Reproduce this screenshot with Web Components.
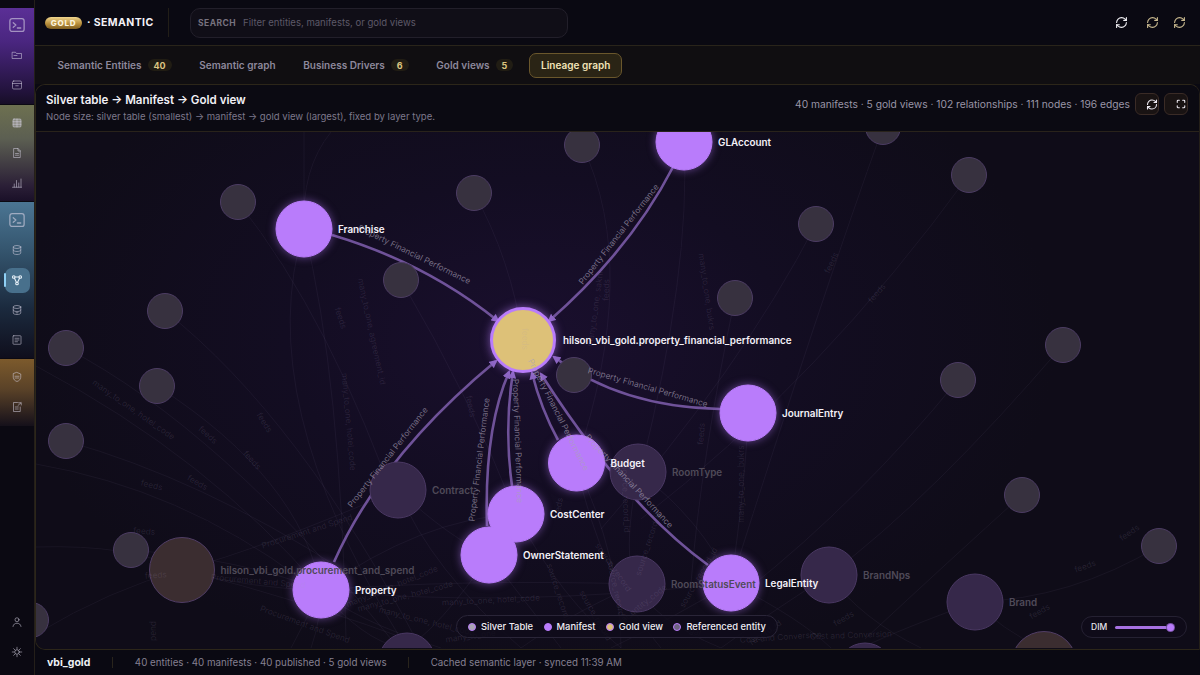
<!doctype html>
<html>
<head>
<meta charset="utf-8">
<style>
  html, body { margin: 0; height: 100%; background: #0a0912; overflow: hidden; }
  body { font-family: Inter, "Liberation Sans", sans-serif; }
  vbi-app { width: 1200px; height: 675px; }
</style>
</head>
<body>
<vbi-app></vbi-app>
<script>
const ICONS = {
  terminal: '<rect x="2.5" y="3.5" width="19" height="17" rx="3"/><path d="M7 9l3.5 3L7 15M12.5 16H17"/>',
  folder: '<path d="M3 6.5h6l2 2.5h10v10H3z"/><path d="M6 13h6"/>',
  archive: '<rect x="3" y="4" width="18" height="16" rx="2.5"/><path d="M3 9h18M9.5 13.5h5"/>',
  table: '<rect x="4" y="4" width="16" height="16" rx="2" fill="currentColor" fill-opacity=".55"/><path d="M12 4v16M4 9.5h16M4 14.5h16"/>',
  doc: '<path d="M6 3h8l4.5 4.5V21H6z"/><path d="M14 3v5h4.5M9 13h6M9 16.5h6"/>',
  chart: '<path d="M3 20.5h18M6.5 20v-6M11 20V7M15.5 20v-8M20 20V4"/>',
  db: '<ellipse cx="12" cy="6" rx="7.5" ry="3"/><path d="M4.5 6v12c0 1.7 3.4 3 7.5 3s7.5-1.3 7.5-3V6M4.5 12c0 1.7 3.4 3 7.5 3s7.5-1.3 7.5-3"/>',
  graph: '<circle cx="5.5" cy="6" r="2.6"/><circle cx="18.5" cy="6" r="2.6"/><circle cx="12" cy="19" r="2.6"/><path d="M8 6h8M7 8.5l3.8 8M17 8.5l-3.8 8"/>',
  dbdown: '<ellipse cx="12" cy="6" rx="7.5" ry="3"/><path d="M4.5 6v12c0 1.7 3.4 3 7.5 3s7.5-1.3 7.5-3V6M4.5 12c0 1.7 3.4 3 7.5 3s7.5-1.3 7.5-3M9.5 16l2.5 2.5 2.5-2.5"/>',
  list: '<rect x="4" y="3.5" width="16" height="17" rx="1.5"/><path d="M8 8.5h8M8 12h8M8 15.5h5"/>',
  shield: '<path d="M12 3l7.5 3v6.5c0 4.3-3.2 7-7.5 8.5-4.3-1.5-7.5-4.2-7.5-8.5V6z"/><path d="M8 10.5h8M8 14h8"/>',
  docedit: '<path d="M18.5 12v9H5V3h8"/><path d="M8.5 12h6M8.5 16h6M15 3.5h5.5V8" /><path d="M14 9l6-5.5"/>',
  user: '<circle cx="12" cy="7.5" r="4"/><path d="M4 21c.8-4.6 3.8-6.5 8-6.5s7.200 1.900 8 6.500"/>',
  gear: '<circle cx="12" cy="12" r="4.500"/><path d="M12 2.500v4M12 17.500v4M2.500 12h4M17.500 12h4M5.300 5.300l2.800 2.800M15.900 15.900l2.800 2.800M5.300 18.700l2.800-2.800M15.900 8.100l2.800-2.800"/>',
  refresh: '<path d="M3 12a9 9 0 0 1 9-9 9.750 9.750 0 0 1 6.740 2.740L21 8"/><path d="M21 3v5h-5"/><path d="M21 12a9 9 0 0 1-9 9 9.750 9.750 0 0 1-6.740-2.740L3 16"/><path d="M8 16H3v5"/>',
  expand: '<path d="M8 3H5a2 2 0 0 0-2 2v3M21 8V5a2 2 0 0 0-2-2h-3M3 16v3a2 2 0 0 0 2 2h3M16 21h3a2 2 0 0 0 2-2v-3"/>'
};

function icon(name, size, width) {
  return `<svg width="${size}" height="${size}" viewBox="0 0 24 24" fill="none" stroke="currentColor" stroke-width="${width || 2}" stroke-linecap="round" stroke-linejoin="round">${ICONS[name]}</svg>`;
}

class SideIcon extends HTMLElement {
  connectedCallback() {
    const active = this.hasAttribute('active');
    const size = this.getAttribute('size') || 13;
    this.attachShadow({ mode: 'open' }).innerHTML = `
      <style>
        :host { display: flex; height: 30px; align-items: center; justify-content: center; color: rgba(214,210,228,.62); position: relative; }
        .pill { width: 25px; height: 25px; border-radius: 7px; display: flex; align-items: center; justify-content: center; }
        :host([active]) { color: #e6f0f8; }
        :host([active]) .pill { background: #48708c; }
        :host([active])::before { content: ''; position: absolute; left: 4px; top: 8px; width: 1.5px; height: 14px; background: #8fd0f5; border-radius: 1px; }
      </style>
      <div class="pill">${icon(this.getAttribute('name'), size, active ? 2.2 : 1.7)}</div>`;
  }
}
customElements.define('side-icon', SideIcon);

class VbiSidebar extends HTMLElement {
  connectedCallback() {
    this.attachShadow({ mode: 'open' }).innerHTML = `
      <style>
        :host { display: flex; flex-direction: column; width: 34px; flex: none; background: #0b0912; border-right: 1px solid #241f1a; box-sizing: content-box; }
        section { padding-top: 3px; box-sizing: border-box; }
        .a { margin-top: 8px; height: 96px; padding-top: 2px; background: linear-gradient(#5b2f96, #4a2680 35%, #21123a 88%, #170e26); }
        .b { margin-top: 1px; height: 96px; background: linear-gradient(#6d7050, #5c5f52 35%, #2a1e36 85%, #1a1028); }
        .c { margin-top: 1px; height: 156px; background: linear-gradient(#4b7593, #35566f 30%, #1b2a3e 68%, #0f0e1c); }
        .d { margin-top: 1px; height: 67px; background: linear-gradient(#7c5a2c, #5a4228 45%, #15101a); }
        .e { margin-top: auto; padding-bottom: 8px; }
      </style>
      <section class="a"><side-icon name="terminal" size="18"></side-icon><side-icon name="folder" size="12"></side-icon><side-icon name="archive" size="12"></side-icon></section>
      <section class="b"><side-icon name="table" size="12"></side-icon><side-icon name="doc" size="12"></side-icon><side-icon name="chart" size="12"></side-icon></section>
      <section class="c"><side-icon name="terminal" size="18"></side-icon><side-icon name="db" size="12"></side-icon><side-icon name="graph" size="12" active></side-icon><side-icon name="dbdown" size="12"></side-icon><side-icon name="list" size="12"></side-icon></section>
      <section class="d"><side-icon name="shield" size="12"></side-icon><side-icon name="docedit" size="12"></side-icon></section>
      <section class="e"><side-icon name="user" size="12"></side-icon><side-icon name="gear" size="12"></side-icon></section>`;
  }
}
customElements.define('vbi-sidebar', VbiSidebar);

class VbiTopbar extends HTMLElement {
  connectedCallback() {
    this.attachShadow({ mode: 'open' }).innerHTML = `
      <style>
        :host { display: flex; align-items: center; height: 45px; flex: none; background: #0a0912; border-bottom: 1px solid #29241a; padding-left: 10px; box-sizing: content-box; }
        .gold { width: 37px; height: 12px; border-radius: 6px; background: linear-gradient(#f0d68e, #b98f3c 55%, #7c5c20); color: #fbf3dc; font-size: 8px; font-weight: 800; letter-spacing: .7px; display: flex; align-items: center; justify-content: center; }
        .title { margin-left: 5px; width: 66px; color: #f4f2f8; font-size: 10.5px; font-weight: 700; letter-spacing: .4px; white-space: nowrap; }
        .sep { width: 1px; height: 29px; background: #221e18; margin: 0 21px 0 15px; }
        .search { width: 378px; height: 30px; box-sizing: border-box; border: 1px solid #221f2a; border-radius: 10px; background: #100e17; display: flex; align-items: center; padding-left: 7px; }
        .search b { font-size: 8.5px; font-weight: 700; letter-spacing: .45px; color: #77727f; width: 45px; }
        .search span { font-size: 9.55px; color: #5d5968; white-space: nowrap; }
        .actions { margin-left: auto; display: flex; align-items: center; padding-right: 14px; }
        .actions span { display: flex; color: #c9b98f; margin-left: 18px; }
        .actions span:first-child { color: #f2f1f5; }
        .actions span + span + span { margin-left: 14px; }
      </style>
      <div class="gold">GOLD</div>
      <div class="title">· SEMANTIC</div>
      <div class="sep"></div>
      <div class="search"><b>SEARCH</b><span>Filter entities, manifests, or gold views</span></div>
      <div class="actions"><span>${icon('refresh', 13)}</span><span>${icon('refresh', 13)}</span><span>${icon('refresh', 13)}</span></div>`;
  }
}
customElements.define('vbi-topbar', VbiTopbar);

class TabItem extends HTMLElement {
  connectedCallback() {
    const count = this.getAttribute('count');
    this.attachShadow({ mode: 'open' }).innerHTML = `
      <style>
        :host { display: flex; align-items: center; height: 23px; padding: 0 11px; color: #8d889c; font-size: 10px; font-weight: 600; letter-spacing: .02px; border: 1px solid transparent; border-radius: 7px; white-space: nowrap; }
        :host([active]) { background: #2a2415; border-color: #6a572c; color: #f1e3b8; }
        i { font-style: normal; margin-left: 6px; height: 12px; min-width: 17px; padding: 0 6px; box-sizing: border-box; border-radius: 7px; background: #211d14; color: #dcc681; font-size: 9px; font-weight: 700; display: flex; align-items: center; justify-content: center; }
      </style>
      <slot></slot>${count ? `<i>${count}</i>` : ''}`;
  }
}
customElements.define('tab-item', TabItem);

class VbiTabs extends HTMLElement {
  connectedCallback() {
    this.attachShadow({ mode: 'open' }).innerHTML = `
      <style>
        :host { display: flex; align-items: center; gap: 3.6px; height: 38px; flex: none; padding-left: 10.5px; background: #100e11; }
      </style>
      <slot></slot>`;
  }
}
customElements.define('vbi-tabs', VbiTabs);

class VbiPanel extends HTMLElement {
  connectedCallback() {
    this.attachShadow({ mode: 'open' }).innerHTML = `
      <style>
        :host { display: flex; flex-direction: column; flex: 1; min-height: 0; border: 1px solid #2c2619; border-right-color: #241f18; border-radius: 10px 10px 0 10px; overflow: hidden; background: #0e0b17; }
        header { display: flex; align-items: center; height: 47px; flex: none; box-sizing: border-box; padding: 0 11px 0 10px; background: #0b0a12; border-bottom: 1px solid #29231b; }
        h1 { margin: 0; font-size: 11.55px; line-height: 15px; font-weight: 600; color: #f2f0f6; white-space: nowrap; }
        p { margin: 2px 0 0; font-size: 9.55px; line-height: 13px; color: #7d788b; white-space: nowrap; }
        .stats { margin-left: auto; margin-bottom: 8px; font-size: 10.25px; color: #9a95a7; white-space: nowrap; }
        button { width: 24px; height: 22px; padding: 0 0 0 10px; margin: 0 0 8px 5px; border-radius: 6px; border: 1px solid #3a2b26; background: #191313; color: #eeeaf2; display: flex; align-items: center; justify-content: center; box-sizing: border-box; }
        main { flex: 1; min-height: 0; position: relative; }
      </style>
      <header>
        <div><h1>Silver table → Manifest → Gold view</h1><p>Node size: silver table (smallest) → manifest → gold view (largest), fixed by layer type.</p></div>
        <div class="stats">40 manifests · 5 gold views · 102 relationships · 111 nodes · 196 edges</div>
        <button>${icon('refresh', 13, 2.2)}</button><button>${icon('expand', 10, 2.6)}</button>
      </header>
      <main><slot></slot></main>`;
  }
}
customElements.define('vbi-panel', VbiPanel);

// page coordinates, viewBox keeps them 1:1
const SILVER = [[581,146],[882,128],[968,176],[815,225],[237,203],[473,194],[400,281],[734,299],[164,312],[65,349],[156,387],[65,442],[573,376],[1062,346],[957,381],[1021,496],[1158,547],[130,551],[30,621]];
const REFERENCED = [[397,491,'Contract'],[637,473,'RoomType'],[636,585,'RoomStatusEvent'],[828,576,'BrandNps'],[974,603,'Brand'],[406,662,''],[864,672,'']];
const GOLD_DIM = [[181,571,'hilson_vbi_gold.procurement_and_spend'],[1043,665,'']];
const MANIFESTS = [[683,143,'GLAccount'],[303,230,'Franchise'],[747,414,'JournalEntry'],[575.5,464,'Budget'],[515,515,'CostCenter'],[488,556,'OwnerStatement'],[320,591,'Property'],[730,584,'LegalEntity']];

const STRONG = [
  'M331 236Q425 264 497 322', 'M672 168Q630 250 548 322', 'M719 410Q620 408 553 358',
  'M557 441Q540 410 531 374', 'M707 566Q624 506 540 375', 'M511 487Q503 430 512 373',
  'M486 527Q483 430 508 373', 'M333 563Q380 457 495 362'
];
const STRONG_LABELS = [
  [412,258,26], [620,237,-52], [646,391,16], [555,417,63], [626,484,47], [481,461,-83], [514,442,88], [389,460,-52]
];

const FAINT = [
  'M237 203Q330 320 400 520','M303 230Q340 380 345 640','M303 230Q250 400 400 640','M330 133Q300 170 303 230','M303 133V230',
  'M164 312Q300 420 420 650','M65 349Q220 430 390 640','M156 387Q300 480 320 591','M65 442Q200 480 340 570','M35 367Q210 460 320 591','M35 465Q180 490 300 580',
  'M130 551Q240 560 320 591','M35 548Q130 545 181 571','M35 635Q110 590 181 571','M181 571Q260 550 397 491','M181 571Q250 590 320 591','M181 571Q300 600 430 649',
  'M400 281Q470 400 515 515','M473 194Q510 260 522 341','M581 146Q640 270 575 464','M882 128Q820 300 730 584','M968 176Q820 380 640 520','M815 225Q740 370 600 530',
  'M734 299Q700 460 690 584','M1062 346Q930 500 828 576','M957 381Q860 500 747 590','M1021 496Q950 560 864 640','M1158 547Q1070 600 974 603',
  'M683 143Q690 270 640 470','M747 414Q745 480 730 584','M637 473Q620 560 636 585','M637 473Q700 520 730 584','M397 491Q450 540 488 556','M397 491Q430 570 520 649',
  'M320 591Q500 610 730 584','M320 591Q460 580 636 585','M320 591Q420 520 515 515','M320 591Q360 640 400 649','M320 591Q300 630 290 649','M320 591Q350 620 440 649','M320 591Q320 620 310 649',
  'M515 515Q560 600 620 649','M488 556Q530 610 560 649','M575 464Q620 560 620 649','M575 464Q600 580 660 649','M730 584Q670 620 610 649','M730 584Q800 620 830 649','M636 585Q560 620 520 649',
  'M636 585Q650 620 720 649','M828 576Q760 620 720 649','M828 576Q860 620 920 649','M974 603Q1000 630 1040 649','M974 603Q900 630 860 649','M406 649Q450 620 515 515'
];
const FAINT_LABELS = [
  ['many_to_one, hotel_code',131,413,35],['feeds',205,438,42],['feeds',249,463,48],['feeds',261,425,58],['feeds',195,486,30],['feeds',150,489,14],['feeds',143,535,5],['feeds',155,579,-4],
  ['many_to_one, agreement_id',368,333,78],['feeds',337,320,72],['many_to_one, hotel_code',345,423,85],['many_to_one, saknr',597,310,-82],['feeds',608,291,-88],['feeds',521,340,90],
  ['many_to_one, bukrs',703,293,82],['many_to_one, bukrs',743,485,-90],['feeds',703,435,-85],['feeds',467,408,78],['feeds',833,265,-65],['feeds',878,296,-50],['feeds',1130,536,-35],
  ['Procurement and Spend',307,535,-18],['Procurement and Spend',257,585,5],['Procurement and Spend',303,628,20],['many_to_one, hotel_code',392,590,-22],['many_to_one, hotel_code',405,600,-15],
  ['many_to_one, hotel_code',490,604,-3],['source_record_id',556,598,72],['source_record',612,590,78],['source_record_id',650,545,-72],['source_record',610,570,55],['legal_entity_code',640,610,-38],
  ['feeds',560,510,-80],['source_record_id',622,500,88],['source_record_id',700,580,-60],['many_to_one, hotel_code',425,625,14],['Cost and Conversion',780,641,-4],['Cost and Conversion',850,639,-2],
  ['many_to_one',470,640,-8],['feeds',844,622,-30],['record_id',766,636,-35],['feeds',1040,615,-30],['feeds',1085,570,-20],['source_record',592,618,60],['legal',690,634,20],['pend',155,632,-90]
];

class LineageGraph extends HTMLElement {
  connectedCallback() {
    const circles = (list, r, fill, stroke) => list.map(n =>
      `<circle cx="${n[0]}" cy="${n[1]}" r="${r}" fill="${fill}" stroke="${stroke}" stroke-width="1"/>`).join('');
    const tag = (list, r, cls) => list.filter(n => n[2]).map(n =>
      `<text class="${cls}" x="${n[0] + r + 6}" y="${n[1] + 4}">${n[2]}</text>`).join('');
    this.attachShadow({ mode: 'open' }).innerHTML = `
      <style>
        :host { display: block; position: absolute; inset: 0; overflow: hidden; background: radial-gradient(ellipse 520px 340px at 500px 210px, #1a0f2e 0%, #130d22 48%, #0f0c18 100%); }
        svg { display: block; }
        text { font-family: Inter, "Liberation Sans", sans-serif; }
        .faint { fill: none; stroke: #b9a8d8; stroke-opacity: .06; stroke-width: 1; }
        .strong { fill: none; stroke: #6f5299; stroke-width: 2.600; marker-end: url(#tip); }
        .fl { font-size: 8.300px; fill: #a79cbc; fill-opacity: .15; text-anchor: middle; }
        .sl { font-size: 8.300px; fill: #aaa1b8; fill-opacity: .66; text-anchor: middle; }
        .name { font-size: 9.870px; font-weight: 600; fill: #f4f1f8; }
        .dim { font-size: 9.870px; font-weight: 600; fill: #4f4a58; }
        .manifest { filter: drop-shadow(0 0 4px rgba(184,124,251,.5)); }
        .gold { filter: drop-shadow(0 0 5px rgba(184,124,251,.6)); }
      </style>
      <svg width="1165" height="516" viewBox="35 133 1165 516">
        <defs><marker id="tip" viewBox="0 0 8 8" refX="6" refY="4" markerWidth="3.200" markerHeight="3.200" orient="auto"><path d="M0 0L8 4L0 8z" fill="#8a64c0"/></marker></defs>
        ${FAINT.map(d => `<path class="faint" d="${d}"/>`).join('')}
        ${STRONG.map(d => `<path class="strong" d="${d}"/>`).join('')}
        ${circles(SILVER, 17.500, '#37313f', '#4c3c63')}
        ${circles(REFERENCED, 28, '#36284a', '#4a3863')}
        ${circles(GOLD_DIM, 32.500, '#3b2d30', '#503d65')}
        <g class="manifest">${circles(MANIFESTS, 28, '#b97cfb', '#b97cfb')}</g>
        <circle class="gold" cx="522" cy="341" r="31.500" fill="#ddc178" stroke="#b97cfb" stroke-width="3"/>
        ${FAINT_LABELS.map(l => `<text class="fl" transform="translate(${l[1]} ${l[2]}) rotate(${l[3]})">${l[0]}</text>`).join('')}
        ${STRONG_LABELS.map(l => `<text class="sl" transform="translate(${l[0]} ${l[1]}) rotate(${l[2]})">Property Financial Performance</text>`).join('')}
        ${tag(REFERENCED, 28, 'dim')}${tag(GOLD_DIM, 32.500, 'dim')}
        ${tag(MANIFESTS, 28, 'name')}
        <text class="name" x="562" y="345">hilson_vbi_gold.property_financial_performance</text>
      </svg>
      <slot></slot>`;
  }
}
customElements.define('lineage-graph', LineageGraph);

class GraphLegend extends HTMLElement {
  connectedCallback() {
    const item = (c, t) => `<span><i style="background:${c}"></i>${t}</span>`;
    this.attachShadow({ mode: 'open' }).innerHTML = `
      <style>
        :host { position: absolute; left: 420px; top: 483px; width: 322px; height: 23px; display: flex; align-items: center; justify-content: space-between; padding: 0 11px; box-sizing: border-box; border: 1px solid #2a2538; border-radius: 12px; background: #0f0b1acc; color: #efedf3; font-size: 9.400px; font-weight: 500; white-space: nowrap; }
        span { display: flex; align-items: center; gap: 5px; }
        i { width: 6px; height: 6px; border-radius: 50%; border: 1.500px solid #b97cfb; }
      </style>
      ${item('#a9a5b2', 'Silver Table')}${item('#b97cfb', 'Manifest')}${item('#ddc178', 'Gold view')}${item('#6e6482', 'Referenced entity')}`;
  }
}
customElements.define('graph-legend', GraphLegend);

class DimControl extends HTMLElement {
  connectedCallback() {
    this.attachShadow({ mode: 'open' }).innerHTML = `
      <style>
        :host { position: absolute; right: 12px; top: 484px; width: 106px; height: 22px; box-sizing: border-box; display: flex; align-items: center; padding: 0 9px; border: 1px solid #252132; border-radius: 11px; background: #0f0b1acc; color: #e6e3ec; font-size: 8.500px; font-weight: 500; }
        .track { margin-left: 8px; width: 52px; height: 3px; border-radius: 2px; background: #a772e2; }
        .thumb { width: 7px; height: 7px; border-radius: 50%; background: #b97cfb; box-shadow: 0 0 0 1px #7a54a8; }
      </style>
      DIM<div class="track"></div><div class="thumb"></div>`;
  }
}
customElements.define('dim-control', DimControl);

class VbiFooter extends HTMLElement {
  connectedCallback() {
    this.attachShadow({ mode: 'open' }).innerHTML = `
      <style>
        :host { display: flex; align-items: center; height: 25px; flex: none; box-sizing: border-box; padding-left: 12px; background: #0a0912; color: #858091; font-size: 9.780px; white-space: nowrap; }
        b { color: #eef2f6; font-size: 10.500px; font-weight: 700; }
        u { width: 1px; height: 11px; background: #29241c; margin: 0 21.500px; }
      </style>
      <b>vbi_gold</b><u style="margin-left:22px"></u><span>40 entities · 40 manifests · 40 published · 5 gold views</span><u></u><span>Cached semantic layer · synced 11:39 AM</span>`;
  }
}
customElements.define('vbi-footer', VbiFooter);

class VbiApp extends HTMLElement {
  connectedCallback() {
    this.attachShadow({ mode: 'open' }).innerHTML = `
      <style>
        :host { display: flex; }
        .col { flex: 1; min-width: 0; display: flex; flex-direction: column; }
      </style>
      <vbi-sidebar></vbi-sidebar>
      <div class="col">
        <vbi-topbar></vbi-topbar>
        <vbi-tabs>
          <tab-item count="40">Semantic Entities</tab-item>
          <tab-item>Semantic graph</tab-item>
          <tab-item count="6">Business Drivers</tab-item>
          <tab-item count="5">Gold views</tab-item>
          <tab-item active>Lineage graph</tab-item>
        </vbi-tabs>
        <vbi-panel>
          <lineage-graph><graph-legend></graph-legend><dim-control></dim-control></lineage-graph>
        </vbi-panel>
        <vbi-footer></vbi-footer>
      </div>`;
  }
}
customElements.define('vbi-app', VbiApp);
</script>
</body>
</html>
